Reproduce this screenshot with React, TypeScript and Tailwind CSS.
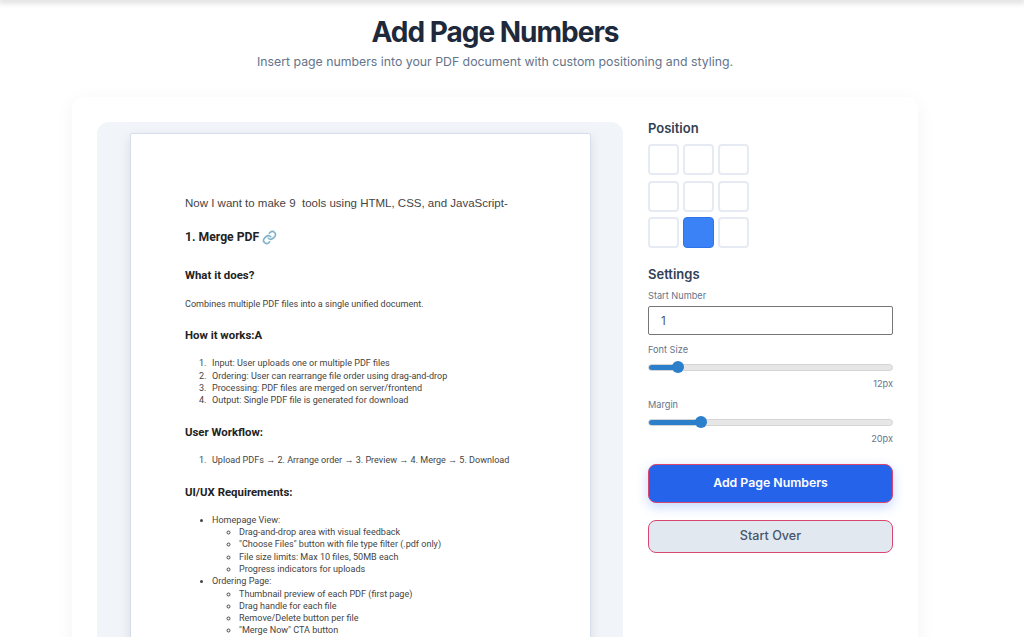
const inter = 'font-["Inter",sans-serif]'

const topItems = [
  'Input: User uploads one or multiple PDF files',
  'Ordering: User can rearrange file order using drag-and-drop',
  'Processing: PDF files are merged on server/frontend',
  'Output: Single PDF file is generated for download',
]

const homeItems = [
  'Drag-and-drop area with visual feedback',
  '"Choose Files" button with file type filter (.pdf only)',
  'File size limits: Max 10 files, 50MB each',
  'Progress indicators for uploads',
]

const orderItems = [
  'Thumbnail preview of each PDF (first page)',
  'Drag handle for each file',
  'Remove/Delete button per file',
  '"Merge Now" CTA button',
]

function SubList({ items }: { items: string[] }) {
  return (
    <ul className="list-[circle] pl-[27px]">
      {items.map(item => (
        <li key={item} className="h-[12.3px]">{item}</li>
      ))}
    </ul>
  )
}

function NumberedRow({ n, text }: { n: number; text: string }) {
  return (
    <li className="flex h-[12.3px]">
      <span className="w-[27px] pl-[14px] shrink-0">{n}.</span>
      <span>{text}</span>
    </li>
  )
}

function PdfPage() {
  return (
    <div className="ml-[33px] mt-[11px] w-[461px] h-[560px] shrink-0 bg-white border border-[#d5deea] rounded-[2px] shadow-[0_4px_12px_rgba(0,0,0,0.1)] pl-[54px] pt-[63px] font-['Roboto',sans-serif] text-[9.05px] leading-[12.3px] text-[#444444]">
      <p className="font-['Liberation_Sans',sans-serif] text-[11.5px] leading-[13px]">Now I want to make 9&nbsp; tools using HTML, CSS, and JavaScript-</p>
      <h2 className="mt-[19px] flex items-center gap-[3px] text-[12.2px] leading-[16px] font-bold text-[#222]">
        1. Merge PDF
        <svg width="15" height="15" viewBox="0 0 24 24" fill="none" stroke="#7fb2c9" strokeWidth="2.6" strokeLinecap="round" strokeLinejoin="round">
          <path d="M10 13a5 5 0 0 0 7.5.5l3-3a5 5 0 0 0-7-7l-1.7 1.7" />
          <path d="M14 11a5 5 0 0 0-7.5-.5l-3 3a5 5 0 0 0 7 7l1.7-1.7" />
        </svg>
      </h2>
      <h3 className="mt-[23px] text-[11.4px] leading-[14px] font-bold text-[#222]">What it does?</h3>
      <p className="mt-[16px]">Combines multiple PDF files into a single unified document.</p>
      <h3 className="mt-[18px] text-[11.4px] leading-[14px] font-bold text-[#222]">How it works:A</h3>
      <ol className="mt-[15px]">
        {topItems.map((item, i) => (
          <NumberedRow key={item} n={i + 1} text={item} />
        ))}
      </ol>
      <h3 className="mt-[19px] text-[11.4px] leading-[14px] font-bold text-[#222]">User Workflow:</h3>
      <ol className="mt-[15px]">
        <NumberedRow n={1} text="Upload PDFs → 2. Arrange order → 3. Preview → 4. Merge → 5. Download" />
      </ol>
      <h3 className="mt-[18px] text-[11.4px] leading-[14px] font-bold text-[#222]">UI/UX Requirements:</h3>
      <ul className="mt-[15px] list-disc pl-[27px]">
        <li>
          Homepage View:
          <SubList items={homeItems} />
        </li>
        <li>
          Ordering Page:
          <SubList items={orderItems} />
        </li>
      </ul>
    </div>
  )
}

function PositionGrid() {
  const cells = [0, 1, 2, 3, 4, 5, 6, 7, 8]
  return (
    <div className="grid grid-cols-[31px_31px_31px] gap-x-[4px] gap-y-[5.5px] mt-[8px]">
      {cells.map(i => (
        <div
          key={i}
          className={
            i === 7
              ? 'h-[31px] rounded-[4px] border border-[#2f74e8] bg-[#3b82f6]'
              : 'h-[31px] rounded-[4px] border-2 border-[#e6ebf3] bg-white'
          }
        />
      ))}
    </div>
  )
}

function SliderField({ label, percent, value }: { label: string; percent: number; value: string }) {
  return (
    <div className="mt-[7px]">
      <label className="block text-[9.2px] leading-[14px] text-[#64748b]">{label}</label>
      <div className="relative h-[7px] mt-[6.5px] rounded-full border border-[#d4d4d4] bg-[#e6e6e6]">
        <div className="h-full rounded-l-full bg-[#2b7fcb]" style={{ width: `${percent}%` }} />
        <div
          className="absolute top-1/2 w-[12px] h-[12px] -mt-[6px] -ml-[6px] rounded-full bg-[#2b7fcb]"
          style={{ left: `${percent}%` }}
        />
      </div>
      <div className="mt-[6.5px] text-right text-[9.2px] leading-[14px] text-[#64748b]">{value}</div>
    </div>
  )
}

export default function App() {
  return (
    <div className={`h-[637px] overflow-hidden bg-white ${inter}`}>
      <div className="h-0 shadow-[0_0_6px_2px_rgba(0,0,0,0.22)]" />
      <div className="w-[846px] ml-[72px]">
        <header className="text-center pt-[14px]">
          <h1 className="text-[28px] leading-[36px] font-bold text-[#1e293b] tracking-[-1px]">Add Page Numbers</h1>
          <p className="mt-[2px] text-[12.3px] leading-[20px] text-[#64748b]">Insert page numbers into your PDF document with custom positioning and styling.</p>
        </header>
        <main className="mt-[25px] h-[560px] bg-white rounded-t-[12px] shadow-[0_4px_20px_rgba(0,0,0,0.05)] flex pl-[25px] pt-[25px]">
          <section className="w-[526px] h-[560px] shrink-0 bg-[#f1f5f9] rounded-[12px] overflow-hidden">
            <PdfPage />
          </section>
          <aside className="w-[245px] ml-[25px]">
            <h2 className="mt-[-2px] text-[13px] leading-[16px] font-semibold text-[#334155]">Position</h2>
            <PositionGrid />
            <h2 className="mt-[18px] text-[13px] leading-[16px] font-semibold text-[#334155]">Settings</h2>
            <label className="block mt-[7px] text-[9.2px] leading-[14px] text-[#64748b]">Start Number</label>
            <input
              type="text"
              defaultValue="1"
              className="block w-full h-[29px] mt-[3px] mb-[8px] px-[12px] rounded-[2px] border border-[#767676] bg-white text-[11.5px] text-[#475569]"
            />
            <SliderField label="Font Size" percent={12} value="12px" />
            <SliderField label="Margin" percent={21.6} value="20px" />
            <button className="block w-full h-[38.5px] mt-[18px] rounded-[8px] border border-[#d9466f] bg-[#2563eb] text-[12.3px] font-semibold text-white shadow-[0_4px_12px_rgba(59,130,246,0.3)]">
              Add Page Numbers
            </button>
            <button className="block w-full h-[32.5px] mt-[17.5px] rounded-[8px] border border-[#d9466f] bg-[#e2e8f0] text-[12.6px] font-medium text-[#475569]">
              Start Over
            </button>
          </aside>
        </main>
      </div>
    </div>
  )
}
